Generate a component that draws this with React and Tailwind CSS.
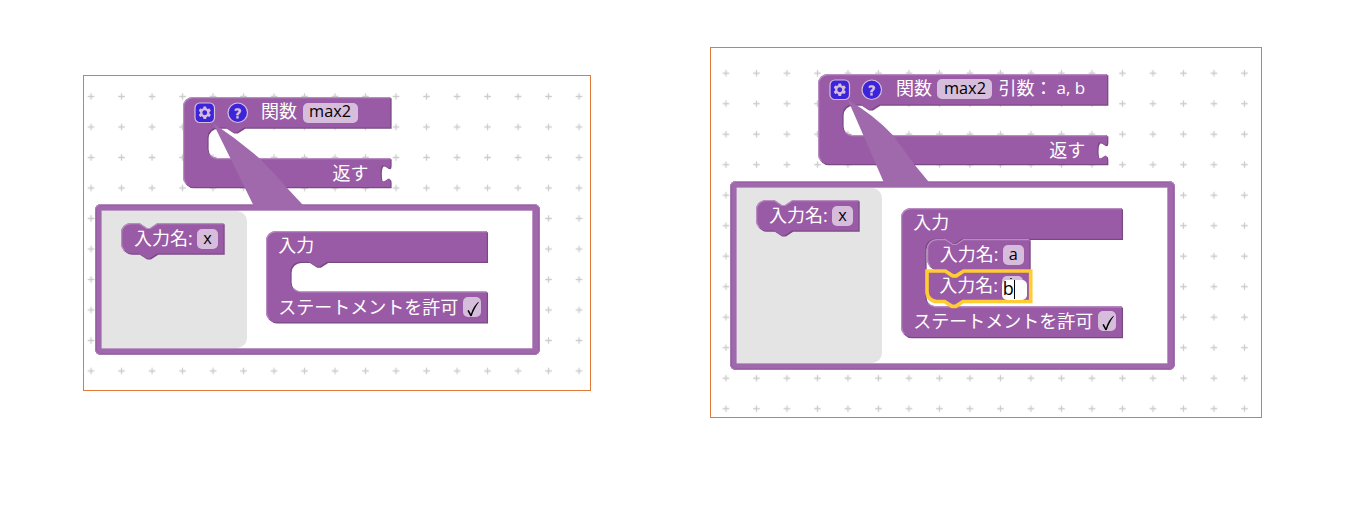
import React from "react";

const S = 1.22;
const FONT = "font-['Open_Sans','Noto_Sans_CJK_JP',sans-serif]";
const NOTCH_L = "l -6,4 -3,0 -6,-4";
const NOTCH_R = "l 6,4 3,0 6,-4";

/* Embossed block outline; path units are workspace units, scaled by S */
function Shape({ path, light, selected }) {
  return (
    <svg className="absolute left-0 top-0 overflow-visible" width="1" height="1" aria-hidden="true">
      <g transform={`scale(${S})`}>
        {!selected && <path d={path} transform="translate(1,1)" fill="#7a4984" />}
        <path d={path} fill="#995ba5" stroke={selected ? "#fc3" : "none"} strokeWidth="3" />
        {!selected && <path d={light} fill="none" stroke="#b88cc0" strokeWidth="1" />}
      </g>
    </svg>
  );
}

function cShape(w, row, gap, bottom, tab) {
  const y1 = row;
  const y2 = row + gap;
  const right = tab
    ? `v 5 c 0,10 -8,-8 -8,7.5 s 8,-2.5 8,7.5 V ${bottom}`
    : `V ${bottom}`;
  const path = `M 0,8 A 8,8 0 0,1 8,0 H ${w} V ${y1} H 50 ${NOTCH_L} h -7 a 8,8 0 0,0 -8,8 V ${y2 - 8} a 8,8 0 0,0 8,8 H ${w} ${right} H 8 a 8,8 0 0,1 -8,-8 z`;
  const light = `M 2.7,${bottom - 2.7} A 7.5,7.5 0 0,1 0.5,${bottom - 8} V 8 A 7.5,7.5 0 0,1 8,0.5 H ${w - 0.5} M 22.4,${y2 - 2.4} a 8.5,8.5 0 0,0 5.6,2.9 H ${w - 0.5}`;
  return { path, light };
}

function inputShape(w, h, square) {
  const start = square ? "M 0,0" : "M 0,8 A 8,8 0 0,1 8,0";
  const path = `${start} H 15 ${NOTCH_R} H ${w} V ${h} H 29.5 ${NOTCH_L} H 8 a 8,8 0 0,1 -8,-8 z`;
  const light = `M 2.7,${h - 2.7} A 7.5,7.5 0 0,1 0.5,${h - 8} V 8 A 7.5,7.5 0 0,1 8,0.5 H 15 ${NOTCH_R} H ${w - 0.5}`;
  return { path, light };
}

function Field({ className, children }) {
  return (
    <span className={`flex h-5 shrink-0 items-center justify-center rounded-[5px] bg-[#d6bddb] text-[16.3px] text-black ${className}`}>
      {children}
    </span>
  );
}

function GearIcon() {
  return (
    <svg className="shrink-0 overflow-visible opacity-60" width="19.5" height="19.5" viewBox="0 0 16 16">
      <rect width="16" height="16" rx="4" fill="#00f" stroke="#fff" />
      <path fill="#fff" d="m4.203,7.296 0,1.368 -0.92,0.677 -0.11,0.41 0.9,1.559 0.41,0.11 1.043,-0.457 1.187,0.683 0.127,1.134 0.3,0.3 1.8,0 0.3,-0.299 0.127,-1.138 1.185,-0.682 1.046,0.458 0.409,-0.11 0.9,-1.559 -0.11,-0.41 -0.92,-0.677 0,-1.366 0.92,-0.677 0.11,-0.41 -0.9,-1.559 -0.409,-0.109 -1.046,0.458 -1.185,-0.682 -0.127,-1.138 -0.3,-0.299 -1.8,0 -0.3,0.3 -0.126,1.135 -1.187,0.682 -1.043,-0.457 -0.41,0.11 -0.899,1.559 0.108,0.409z" />
      <circle cx="8" cy="8" r="2.5" fill="#00f" stroke="#fff" />
    </svg>
  );
}

function HelpIcon() {
  return (
    <svg className="shrink-0 overflow-visible opacity-60" width="19.5" height="19.5" viewBox="0 0 16 16">
      <circle cx="8" cy="8" r="8" fill="#00f" stroke="#fff" />
      <path fill="#fff" stroke="#fff" strokeWidth="0.3" d="m6.8,10h2c0.003,-0.617 0.271,-0.962 0.633,-1.266 2.875,-2.405 0.607,-5.534 -3.765,-3.874v1.7c3.12,-1.657 3.698,0.118 2.336,1.25 -1.201,0.998 -1.201,1.528 -1.204,2.19z" />
      <rect x="6.8" y="10.78" width="2" height="2" fill="#fff" />
    </svg>
  );
}

function Label({ className = "", children }) {
  return <span className={`shrink-0 ${className}`}>{children}</span>;
}

function FunctionBlock({ args, size, className }) {
  const { path, light } = cShape(size, 25, 25, 73.8, true);
  return (
    <div className={`absolute ${className}`}>
      <Shape path={path} light={light} />
      <div className="relative flex h-[31px] items-center pl-[11.7px]">
        <GearIcon />
        <span className="w-[13px] shrink-0" />
        <HelpIcon />
        <Label className="ml-[14px] -mt-[3px]">関数</Label>
        <Field className="ml-[5.5px] w-[55px] pb-[3px]">max2</Field>
        {args && <Label className="ml-[6px] -mt-[3px]">引数：</Label>}
        {args && <Label className="ml-[4px] -mt-[3px] text-[17px]">{args}</Label>}
      </div>
      <div className="relative mt-[30px] flex h-[30px] items-center justify-end pr-[23px]">
        <Label>返す</Label>
      </div>
    </div>
  );
}

function InputBlock({ className, square, selected, children }) {
  const { path, light } = inputShape(selected ? 85 : 84, 25, square);
  return (
    <div className={`absolute h-[31px] w-[104px] ${className}`}>
      <Shape path={path} light={light} selected={selected} />
      <div className="relative flex h-[31px] items-center pl-[12.5px]">
        <Label className="w-[63px] -mt-[2px]">入力名:</Label>
        {children}
      </div>
    </div>
  );
}

function Container({ className, gap, gapClass, children }) {
  const { path, light } = cShape(181, 25.2, gap, gap + 50.5, false);
  return (
    <div className={`absolute w-[222px] ${className}`}>
      <Shape path={path} light={light} />
      <div className="relative flex h-[31px] items-center pb-[3px] pl-[12px]">
        <Label>入力</Label>
      </div>
      <div className={gapClass} />
      <div className="relative flex h-[31px] items-center pl-[12px]">
        <Label className="w-[179px] -mt-[1px]">ステートメントを許可</Label>
        <Field className="ml-[6px] w-[17.5px]">
          <svg width="12" height="16" viewBox="0 0 12 16" className="mt-[3px] ml-[1px]">
            <path d="M0.4,9.8 1.8,9 3.9,12.9 C5.6,8 8,3.8 11.4,0.8 L11.8,1.2 C9,5 6.3,10 4.7,15 L3.4,15.3 Z" fill="#000" />
          </svg>
        </Field>
      </div>
      {children}
    </div>
  );
}

/* Pointer from the gear icon down to the bubble */
function Tail({ d }) {
  return (
    <svg className="absolute left-0 top-0 overflow-visible" width="1" height="1" aria-hidden="true">
      <path d={d} fill="#a069ac" />
    </svg>
  );
}

function Bubble({ className, tail, children }) {
  return (
    <div className={`absolute w-[445px] rounded-[6px] bg-[#a069ac] py-[7px] pl-[7px] pr-[8px] shadow-[inset_0_1px_0_#b78dc0,inset_0_0_0_1px_#a678b1,inset_0_0_0_2px_#9a5ea6] ${className}`}>
      <Tail d={tail} />
      <div className="relative h-full bg-white shadow-[0_0_0_0.5px_#d9c6dd]">
        <div className="h-full w-[145px] rounded-r-[10px] bg-[#e4e4e4]" />
      </div>
      {children}
    </div>
  );
}

function Workspace({ className, id, gridX, gridY, children }) {
  return (
    <section className={`relative shrink-0 overflow-hidden border border-[#e27b3a] bg-white text-[18px] leading-[24px] whitespace-nowrap text-white ${FONT} ${className}`}>
      <svg className="absolute inset-0 h-full w-full" aria-hidden="true">
        <pattern id={id} x={gridX} y={gridY} width="30.5" height="30.5" patternUnits="userSpaceOnUse">
          <path d="M12,15.25 H18.5 M15.25,12 V18.5" stroke="#ccc" strokeWidth="1.3" />
        </pattern>
        <rect width="100%" height="100%" fill={`url(#${id})`} />
      </svg>
      {children}
    </section>
  );
}

export default function App() {
  return (
    <main className="flex h-[508px] w-[1347px] items-start overflow-hidden bg-white pl-[83px]">
      <Workspace id="grid-left" gridX={-8.2} gridY={5.25} className="mt-[75px] h-[316px] w-[508px]">
        <FunctionBlock size={170} className="left-[99.4px] top-[21.3px] w-[208px]" />
        <Bubble
          className="left-[11px] top-[128px] h-[151px]"
          tail="M118,-81 L159.3,3 H210 L207,0 L193,-15 Q180,-30 165,-45.3 Q142,-65 118,-81 Z"
        >
          <InputBlock className="left-[26.4px] top-[19.4px]">
            <Field className="w-[21px] pb-px">x</Field>
          </InputBlock>
          <Container className="left-[171.3px] top-[26.5px]" gap={24.3} gapClass="h-[30px]" />
        </Bubble>
      </Workspace>
      <Workspace id="grid-right" gridX={-0.3} gridY={9.95} className="ml-[119px] mt-[47px] h-[371px] w-[552px]">
        <FunctionBlock size={237} args="a, b" className="left-[107.3px] top-[25.8px] w-[290px]" />
        <Bubble
          className="left-[19px] top-[133px] h-[189px]"
          tail="M118,-81 L154.5,3 H201 L198,0 L185,-15.7 Q174,-31 163,-45.7 Q144,-66 118,-81 Z"
        >
          <InputBlock className="left-[26.4px] top-[19.4px]">
            <Field className="w-[21px] pb-px">x</Field>
          </InputBlock>
          <Container className="left-[171.3px] top-[26.5px]" gap={55.3} gapClass="h-[67px]">
            <InputBlock className="left-[26px] top-[31.5px]">
              <Field className="w-[21px] pb-px">a</Field>
            </InputBlock>
            <InputBlock className="left-[25.4px] top-[63px]" square selected>
              <Field className="w-[21px]" />
              <span className="absolute left-[83px] top-[7px] h-px w-[2px] bg-[#333]" />
              <span className="absolute left-[75px] top-[9px] flex h-[20px] w-[25px] items-center rounded-[5px] bg-white pb-[3px] pl-[1px] text-black">
                b
                <span className="mt-[3px] h-[19px] w-px bg-black" />
              </span>
            </InputBlock>
          </Container>
        </Bubble>
      </Workspace>
    </main>
  );
}
